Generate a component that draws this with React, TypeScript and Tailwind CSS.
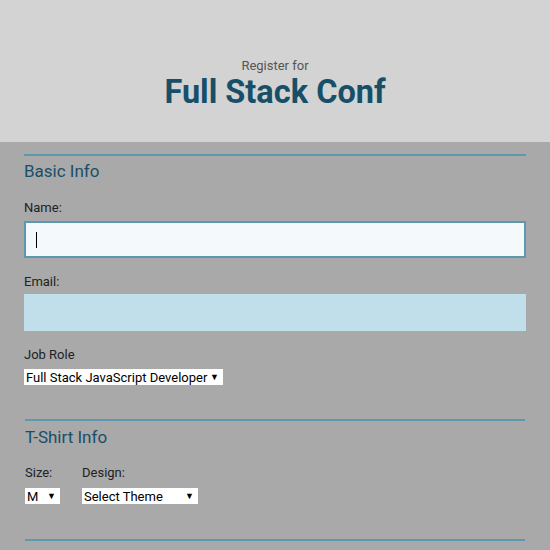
import React from "react";

function FakeSelect({ text, width }: { text: string; width: string }) {
  return (
    <div className={`flex h-[16px] items-center justify-between bg-white pl-[2px] pr-[4px] text-[13px] leading-none text-black ${width}`}>
      <span>{text}</span>
      <span className="text-[9px]">▼</span>
    </div>
  );
}

export default function App() {
  return (
    <div className="min-h-[550px] bg-[#a9a9a9] font-['Roboto',sans-serif]">
      <header className="flex h-[142px] flex-col items-center bg-[#d3d3d3] pt-[58px]">
        <div className="text-[13px] leading-[16px] text-[#555]">Register for</div>
        <h1 className="mt-[1px] text-[32.5px] font-bold leading-[34px] text-[#184f68]">Full Stack Conf</h1>
      </header>
      <main className="px-[24px]">
        <section className="mt-[12px] border-t-2 border-[#5e97b0] pt-[4px]">
          <h2 className="text-[17px] leading-[22px] text-[#184f68]">Basic Info</h2>
          <div className="mt-[18px] text-[13px] leading-[16px] text-[#222]">Name:</div>
          <div className="mt-[5px] flex h-[37px] items-center border-2 border-[#5e97b0] bg-[#f4f9fc] pl-[10px]">
            <div className="h-[16px] w-[1px] bg-black" />
          </div>
          <div className="mt-[16px] text-[13px] leading-[16px] text-[#222]">Email:</div>
          <div className="mt-[4px] h-[37px] bg-[#c1deeb]" />
          <div className="mt-[16px] text-[13px] leading-[16px] text-[#222]">Job Role</div>
          <div className="mt-[6px]">
            <FakeSelect text="Full Stack JavaScript Developer" width="w-[199px]" />
          </div>
        </section>
        <section className="mt-[34px] ml-[1px] mr-[1px] border-t-2 border-[#5e97b0] pt-[5px]">
          <h2 className="text-[17px] leading-[22px] text-[#184f68]">T-Shirt Info</h2>
          <div className="mt-[17px] flex gap-[22px]">
            <div>
              <div className="text-[13px] leading-[16px] text-[#222]">Size:</div>
              <div className="mt-[7px]">
                <FakeSelect text="M" width="w-[35px]" />
              </div>
            </div>
            <div>
              <div className="text-[13px] leading-[16px] text-[#222]">Design:</div>
              <div className="mt-[7px]">
                <FakeSelect text="Select Theme" width="w-[116px]" />
              </div>
            </div>
          </div>
        </section>
        <section className="mt-[35px] ml-[1px] mr-[1px] border-t-2 border-[#5e97b0] h-[20px]" />
      </main>
    </div>
  );
}
